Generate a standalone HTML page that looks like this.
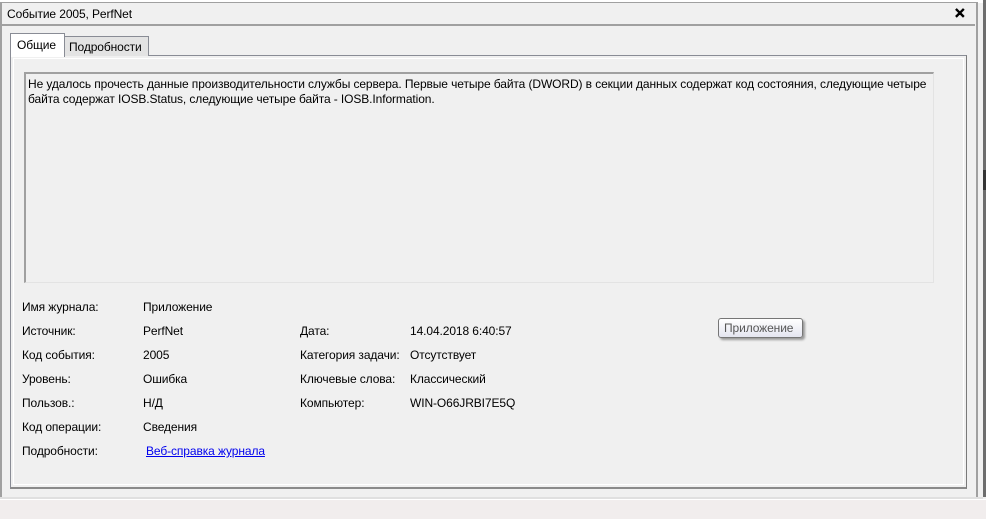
<!DOCTYPE html>
<html><head><meta charset="utf-8"><style>
*{margin:0;padding:0;box-sizing:border-box}
body{width:986px;height:519px;background:#f0f0f0;position:relative;overflow:hidden;font-family:"Liberation Sans","DejaVu Sans",sans-serif;font-size:12px;color:#000}
.a{position:absolute}
.t{position:absolute;white-space:nowrap;font-size:12px;letter-spacing:-0.1px}
</style></head><body>
<div class="a" style="left:0;top:0;width:986px;height:3px;background:#fff"></div>
<div class="a" style="left:0;top:2px;width:978px;height:1px;background:#a0a0a0"></div>
<div class="a" style="left:0;top:2px;width:2px;height:497px;background:#a0a0a0"></div>
<div class="a" style="left:976px;top:2px;width:2px;height:497px;background:#a0a0a0"></div>
<div class="a" style="left:983px;top:0;width:3px;height:497px;background:#6d6d6d"></div>
<div class="a" style="left:983px;top:170px;width:3px;height:20px;background:#333"></div>
<div class="t" style="left:7px;top:7px">Событие 2005, PerfNet</div>
<div class="t" style="left:954px;top:5px;font-weight:bold;font-size:14px;-webkit-text-stroke:1px #000">✕</div>
<div class="a" style="left:2px;top:24px;width:973px;height:2px;background:#a0a0a0"></div>
<div class="a" style="left:10px;top:55px;width:957px;height:434px;border:1px solid #898c95;border-right-color:#7a7a7a;border-bottom:2px solid #8a8a8a;background:#f0f0f0"></div>
<div class="a" style="left:13px;top:58px;width:951px;height:427px;border:1px solid #fff"></div>
<div class="a" style="left:64px;top:36px;width:85px;height:20px;border:1px solid #898c95;border-bottom:none;background:#e3e3e3"></div>
<div class="t" style="left:69px;top:40px">Подробности</div>
<div class="a" style="left:10px;top:33px;width:55px;height:24px;border:1px solid #898c95;border-bottom:none;background:#fff"></div>
<div class="t" style="left:17px;top:38px">Общие</div>
<div class="a" style="left:24px;top:72px;width:910px;height:211px;border:1px solid #e3e3e3;border-top:2px solid #a0a0a0;border-left:2px solid #a0a0a0;background:#f0f0f0"></div>
<div class="t" style="left:28px;top:77px;line-height:15px">Не удалось прочесть данные производительности службы сервера. Первые четыре байта (DWORD) в секции данных содержат код состояния, следующие четыре<br>байта содержат IOSB.Status, следующие четыре байта - IOSB.Information.</div>
<div class="t" style="left:22px;top:300px">Имя журнала:</div><div class="t" style="left:143px;top:300px">Приложение</div>
<div class="t" style="left:22px;top:324px">Источник:</div><div class="t" style="left:143px;top:324px">PerfNet</div>
<div class="t" style="left:22px;top:348px">Код события:</div><div class="t" style="left:143px;top:348px">2005</div>
<div class="t" style="left:22px;top:372px">Уровень:</div><div class="t" style="left:143px;top:372px">Ошибка</div>
<div class="t" style="left:22px;top:396px">Пользов.:</div><div class="t" style="left:143px;top:396px">Н/Д</div>
<div class="t" style="left:22px;top:420px">Код операции:</div><div class="t" style="left:143px;top:420px">Сведения</div>
<div class="t" style="left:22px;top:444px">Подробности:</div><div class="t" style="left:146px;top:444px;color:#0000ee;text-decoration:underline">Веб-справка журнала </div>
<div class="t" style="left:300px;top:324px">Дата:</div><div class="t" style="left:410px;top:324px">14.04.2018 6:40:57</div>
<div class="t" style="left:300px;top:348px">Категория задачи:</div><div class="t" style="left:410px;top:348px">Отсутствует</div>
<div class="t" style="left:300px;top:372px">Ключевые слова:</div><div class="t" style="left:410px;top:372px">Классический</div>
<div class="t" style="left:300px;top:396px">Компьютер:</div><div class="t" style="left:410px;top:396px">WIN-O66JRBI7E5Q</div>
<div class="a" style="left:718px;top:318px;width:85px;height:20px;border:1px solid #767676;border-radius:3px;background:linear-gradient(#fff,#e4e5f0);box-shadow:2px 2px 2px #999"></div>
<div class="t" style="left:724px;top:321px;color:#575757">Приложение</div>
<div class="a" style="left:0;top:497px;width:983px;height:2px;background:#e0e0e0"></div>
<div class="a" style="left:0;top:499px;width:986px;height:20px;background:#f1eded;border-top:1px solid #fff"></div>
</body></html>
